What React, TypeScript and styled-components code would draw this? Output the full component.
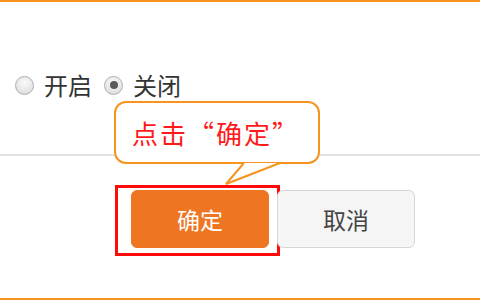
import React from 'react';
import styled, { createGlobalStyle } from 'styled-components';

const GlobalStyle = createGlobalStyle`
  html, body {
    margin: 0;
    padding: 0;
    background: #fff;
  }
  body {
    font-family: "Noto Sans CJK SC", "Noto Sans", sans-serif;
  }
`;

const Page = styled.div`
  position: relative;
  width: 480px;
  height: 300px;
  box-sizing: border-box;
  border-top: 2px solid #f7931e;
  border-bottom: 2px solid #f7931e;
  display: flex;
  flex-direction: column;
  overflow: hidden;
`;

const Options = styled.div`
  height: 152px;
  display: flex;
  align-items: flex-start;
  padding: 70px 0 0 15px;
  box-sizing: border-box;
  gap: 12px;
`;

const Radio = styled.label`
  display: flex;
  align-items: center;
  gap: 10px;
  font-size: 24px;
  line-height: 26px;
  color: #333;
`;

const Dot = styled.span<{ $checked?: boolean }>`
  width: 17px;
  height: 17px;
  border-radius: 50%;
  border: 1px solid #b0b0b0;
  background: radial-gradient(circle at 50% 35%, #fafafa 0%, #e4e4e4 65%, #cfcfcf 100%);
  display: flex;
  align-items: center;
  justify-content: center;

  &::after {
    content: '';
    width: 8px;
    height: 8px;
    border-radius: 50%;
    background: ${p => (p.$checked ? '#5a5a5a' : 'transparent')};
  }
`;

const Divider = styled.div`
  height: 2px;
  background: #e2e2e2;
`;

const Actions = styled.div`
  display: flex;
  gap: 8px;
  padding: 34px 0 0 131px;
`;

const Button = styled.button<{ $primary?: boolean }>`
  position: relative;
  width: 138px;
  height: 58px;
  border-radius: 6px;
  font-family: inherit;
  font-size: 23px;
  cursor: pointer;
  border: 1px solid ${p => (p.$primary ? '#ee7521' : '#d6d6d6')};
  background: ${p => (p.$primary ? '#ee7521' : '#f5f5f5')};
  color: ${p => (p.$primary ? '#fff' : '#444')};
`;

const Highlight = styled.span`
  position: absolute;
  left: -17px;
  top: -6px;
  right: -12px;
  bottom: -9px;
  border: 3px solid #ff0a0a;
  pointer-events: none;
`;

const Callout = styled.div`
  position: absolute;
  left: 114px;
  top: 99px;
  width: 206px;
  height: 63px;
  box-sizing: border-box;
  border: 2px solid #f7931e;
  border-radius: 12px;
  background: #fff;
  display: flex;
  align-items: center;
  padding-left: 16px;
  font-size: 26px;
  letter-spacing: 2px;
  color: #ff1a1a;
`;

const Tail = styled.svg`
  position: absolute;
  left: 108px;
  top: 59px;
  overflow: visible;
`;

export default function App() {
  return (
    <>
      <GlobalStyle />
      <Page>
        <Options>
          <Radio>
            <Dot />
            开启
          </Radio>
          <Radio>
            <Dot $checked />
            关闭
          </Radio>
        </Options>
        <Divider />
        <Actions>
          <Button $primary>
            确定
            <Highlight />
          </Button>
          <Button>取消</Button>
        </Actions>
        <Callout>
          点击“确定”
          <Tail width="60" height="24" viewBox="0 0 60 24">
            <path d="M20 1 L2 22 L56 1" fill="#fff" stroke="#f7931e" strokeWidth="2" strokeLinejoin="miter" />
          </Tail>
        </Callout>
      </Page>
    </>
  );
}
